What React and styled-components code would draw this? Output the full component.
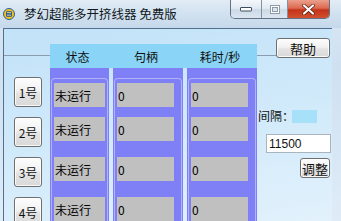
import React from "react";
import styled, { createGlobalStyle } from "styled-components";

const Global = createGlobalStyle`
  html, body { margin: 0; padding: 0; }
  body {
    width: 341px; height: 221px; overflow: hidden;
    font-family: "Liberation Sans", "Noto Sans CJK SC", sans-serif;
  }
`;

const Window = styled.div`
  width: 341px; height: 221px;
  display: flex; flex-direction: column;
  background: linear-gradient(180deg, #dce8f4 0%, #cfe0f0 30%, #dfecf8 100%);
  overflow: hidden;
`;

const TitleBar = styled.div`
  height: 28px; flex: none;
  display: flex; align-items: flex-start;
  padding-left: 3px;
  background: linear-gradient(180deg, #e2ecf6 0%, #d3e2f0 45%, #c5d8eb 100%);
`;

const IconWrap = styled.div`
  margin-top: 8px; width: 12px; height: 12px; flex: none;
  display: flex;
`;

const Title = styled.div`
  margin-left: 9px; margin-top: 5px;
  font-family: "Noto Sans CJK SC", sans-serif;
  font-size: 12.5px; line-height: 18px; color: #101820;
  white-space: nowrap;
`;

const Captions = styled.div`
  margin-left: auto; margin-right: 11px;
  display: flex; height: 18px;
  border: 1px solid #5f7286; border-top: none;
  border-radius: 0 0 5px 5px;
  overflow: hidden;
`;

const CapBtn = styled.div`
  width: ${(p) => p.$w}px; height: 18px;
  display: flex; align-items: center; justify-content: center;
  background: ${(p) =>
    p.$close
      ? "linear-gradient(180deg, #eba08c 0%, #dc6a50 45%, #c3341a 55%, #d2502f 100%)"
      : "linear-gradient(180deg, #f4f7fa 0%, #e3eaf2 45%, #cdd9e6 55%, #dbe6f1 100%)"};
  border-left: ${(p) => (p.$first ? "none" : "1px solid #7f92a6")};
  box-sizing: border-box;
`;

const FrameBody = styled.div`
  flex: 1; display: flex;
  padding: 0 9px 0 3px;
  min-height: 0;
`;

const Client = styled.div`
  flex: 1; display: flex;
  border-top: 1px solid #53708e; border-left: 1px solid #53708e;
  background: linear-gradient(170deg, #c2e2f8 0%, #cfe9fa 45%, #e2f1fc 100%);
  min-width: 0;
`;

const LeftPane = styled.div`
  width: 46px; flex: none;
  display: flex; flex-direction: column;
`;

const Rule = styled.div`
  height: 1px; background: #8a9cad;
  margin-top: ${(p) => p.$top}px;
  flex: ${(p) => (p.$grow ? 1 : "none")};
`;

const SlotList = styled.div`
  display: flex; flex-direction: column; gap: 10px;
  padding: 21px 0 0 10px;
`;

const WinButton = styled.button`
  all: unset; box-sizing: border-box;
  width: ${(p) => p.$w}px; height: ${(p) => p.$h}px;
  display: flex; align-items: center; justify-content: center;
  border: 1px solid #6f6f6f; border-radius: 3px;
  background: linear-gradient(180deg, #fdfdfd 0%, #f1f1f1 45%, #e3e3e3 55%, #d9d9d9 100%);
  box-shadow: inset 0 0 0 1px rgba(255,255,255,0.8);
  font-family: "Noto Sans CJK SC", sans-serif;
  font-size: ${(p) => p.$fs || 12}px; color: #111;
  flex: none;
`;

const Table = styled.div`
  width: 207px; flex: none;
  display: flex; flex-direction: column;
  padding-top: 15px;
`;

const Header = styled.div`
  height: 24px; flex: none;
  display: grid; grid-template-columns: 59px 4px 70px 4px 70px;
  align-items: center;
  background: #8ad5f7;
`;

const HeadText = styled.div`
  grid-column: ${(p) => p.$col};
  text-align: center;
  font-family: "Noto Sans CJK SC", sans-serif;
  font-size: 12px; color: #111;
  margin-left: -4px;
`;

const Columns = styled.div`
  flex: 1; display: flex; gap: 4px;
`;

const Column = styled.div`
  width: ${(p) => p.$w}px; flex: none;
  background: #7f7ff6;
  padding: 10px 1px 0;
  box-sizing: border-box;
  display: flex;
`;

const Group = styled.div`
  flex: 1;
  border: 1px solid #b2b2fa; border-bottom: none;
  border-radius: 4px 4px 0 0;
  padding: 4px 2px 0;
  display: flex; flex-direction: column;
`;

const Cell = styled.div`
  width: ${(p) => p.$w}px; height: 24px; flex: none;
  margin-bottom: ${(p) => (p.$tight ? 10 : 16)}px;
  background: #c0c0c0;
  display: flex; align-items: center;
  padding-left: 1px; box-sizing: border-box;
  font-family: "Noto Sans CJK SC", sans-serif;
  font-size: 12px; color: #000;
`;

const RightPane = styled.div`
  flex: 1; display: flex; flex-direction: column;
  padding-top: 9px;
`;

const HelpRow = styled.div`
  display: flex; align-items: flex-start; padding-right: 2px;
`;

const IntervalRow = styled.div`
  display: flex; align-items: center;
  margin-top: 50px; padding-left: 1px;
`;

const Label = styled.span`
  font-family: "Noto Sans CJK SC", sans-serif;
  font-size: 12px; line-height: 16px; color: #111;
`;

const CyanBox = styled.span`
  width: 25px; height: 13px; background: #a6e0f9; margin-left: -2px;
`;

const Input = styled.input`
  all: unset; box-sizing: border-box;
  margin: 10px 1px 0 9px;
  height: 19px; width: 65px;
  border: 1px solid #a9b4bf; background: #fff;
  padding-left: 2px;
  font-family: "Liberation Sans", sans-serif; font-size: 12px; color: #111;
`;

const AdjustRow = styled.div`
  display: flex; justify-content: flex-end; padding-right: 2px; margin-top: 5px;
`;

const AppIcon = () => (
  <svg width="12" height="12" viewBox="0 0 12 12">
    <circle cx="6" cy="6" r="5.5" fill="#f2c21b" stroke="#2a5fa8" strokeWidth="1" />
    <rect x="3" y="3.2" width="6" height="5.6" rx="1" fill="#1f4f9c" />
    <rect x="3.8" y="4.2" width="4.4" height="1" fill="#f6e27a" />
    <rect x="3.8" y="6.6" width="4.4" height="1" fill="#f6e27a" />
  </svg>
);

const MinGlyph = () => (
  <svg width="12" height="6" viewBox="0 0 12 6">
    <rect x="0.5" y="1.5" width="11" height="3.5" rx="0.5" fill="#fff" stroke="#3c4c5e" />
  </svg>
);
const MaxGlyph = () => (
  <svg width="10" height="9" viewBox="0 0 10 9">
    <rect x="0.5" y="0.5" width="9" height="8" fill="#fff" stroke="#8d9bab" />
    <rect x="2.5" y="2.5" width="5" height="4" fill="#dde4ec" stroke="#8d9bab" />
  </svg>
);
const CloseGlyph = () => (
  <svg width="13" height="11" viewBox="0 0 13 11">
    <path d="M2 1.5 L11 9.5 M11 1.5 L2 9.5" stroke="#5b1a10" strokeWidth="3.6" strokeLinecap="round" />
    <path d="M2 1.5 L11 9.5 M11 1.5 L2 9.5" stroke="#fff" strokeWidth="2.2" strokeLinecap="round" />
  </svg>
);

const columns = [
  { w: 59, cw: 51, text: "未运行" },
  { w: 70, cw: 57, text: "0" },
  { w: 70, cw: 57, text: "0" },
];

export default function App() {
  return (
    <>
      <Global />
      <Window>
        <TitleBar>
          <IconWrap><AppIcon /></IconWrap>
          <Title>梦幻超能多开挤线器 免费版</Title>
          <Captions>
            <CapBtn $w={30} $first><MinGlyph /></CapBtn>
            <CapBtn $w={26}><MaxGlyph /></CapBtn>
            <CapBtn $w={42} $close><CloseGlyph /></CapBtn>
          </Captions>
        </TitleBar>
        <FrameBody>
          <Client>
            <LeftPane>
              <Rule $top={26} />
              <SlotList>
                {[1, 2, 3, 4].map((n) => (
                  <WinButton key={n} $w={28} $h={30}>{n}号</WinButton>
                ))}
              </SlotList>
            </LeftPane>
            <Table>
              <Header>
                <HeadText $col={1}>状态</HeadText>
                <HeadText $col={3}>句柄</HeadText>
                <HeadText $col={5}>耗时/秒</HeadText>
              </Header>
              <Columns>
                {columns.map((c, i) => (
                  <Column key={i} $w={c.w}>
                    <Group>
                      {[0, 1, 2, 3].map((r) => (
                        <Cell key={r} $w={c.cw} $tight={r === 0}>{c.text}</Cell>
                      ))}
                    </Group>
                  </Column>
                ))}
              </Columns>
            </Table>
            <RightPane>
              <HelpRow>
                <Rule $top={17} $grow />
                <WinButton $w={54} $h={20} $fs={13}>帮助</WinButton>
              </HelpRow>
              <IntervalRow>
                <Label>间隔：</Label>
                <CyanBox />
              </IntervalRow>
              <Input defaultValue="11500" />
              <AdjustRow>
                <WinButton $w={30} $h={20} $fs={13}>调整</WinButton>
              </AdjustRow>
            </RightPane>
          </Client>
        </FrameBody>
      </Window>
    </>
  );
}
